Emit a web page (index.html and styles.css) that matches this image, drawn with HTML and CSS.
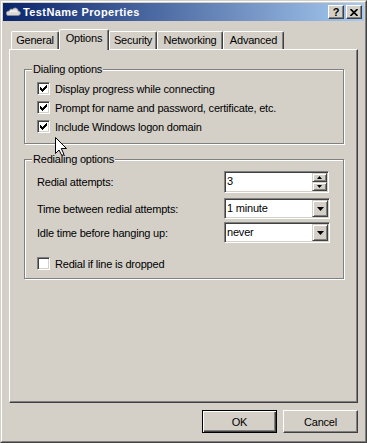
FILE: index.html
```html
<!DOCTYPE html>
<html lang="en">
<head>
    <meta charset="UTF-8">
    <title>TestName Properties</title>
    <link rel="stylesheet" href="styles.css">
</head>
<body>
    <div class="window">
        <div class="frame">
            <div class="titlebar">
                <svg class="title-icon" viewBox="0 0 16 16">
                    <path d="M2.5 11.5 H13 a2.3 2.3 0 0 0 0.3-4.6 a3.2 3.2 0 0 0-5.8-1.6 a2.4 2.4 0 0 0-3.4 1.8 a2.2 2.2 0 0 0-1.1 4.4z" fill="#d8d8d8" stroke="#8c8c8c" stroke-width="0.8"/>
                    <path d="M5 8 q2-2 4-0.5 q2-1 3 0.5" fill="none" stroke="#fff" stroke-width="1"/>
                </svg>
                <span class="title-text">TestName Properties</span>
                <div class="caption-buttons">
                    <div class="caption-btn">?</div>
                    <div class="caption-btn">
                        <svg width="8" height="7" viewBox="0 0 8 7">
                            <path d="M0.5 0 L7.5 7 M7.5 0 L0.5 7" stroke="#000" stroke-width="1.6"/>
                        </svg>
                    </div>
                </div>
            </div>

            <div class="client">
                <div class="tabs">
                    <div class="tab tab-general">General</div>
                    <div class="tab tab-options active">Options</div>
                    <div class="tab tab-security">Security</div>
                    <div class="tab tab-networking">Networking</div>
                    <div class="tab tab-advanced">Advanced</div>
                </div>

                <div class="panel">
                    <div class="group group-dialing">
                        <div class="group-label">Dialing options</div>
                        <div class="check-row">
                            <span class="checkbox checked"><svg viewBox="0 0 11 11"><rect x="2" y="4" width="1" height="3"/><rect x="3" y="5" width="1" height="3"/><rect x="4" y="6" width="1" height="3"/><rect x="5" y="5" width="1" height="3"/><rect x="6" y="4" width="1" height="3"/><rect x="7" y="3" width="1" height="3"/><rect x="8" y="2" width="1" height="3"/></svg></span>
                            Display progress while connecting
                        </div>
                        <div class="check-row">
                            <span class="checkbox checked"><svg viewBox="0 0 11 11"><rect x="2" y="4" width="1" height="3"/><rect x="3" y="5" width="1" height="3"/><rect x="4" y="6" width="1" height="3"/><rect x="5" y="5" width="1" height="3"/><rect x="6" y="4" width="1" height="3"/><rect x="7" y="3" width="1" height="3"/><rect x="8" y="2" width="1" height="3"/></svg></span>
                            Prompt for name and password, certificate, etc.
                        </div>
                        <div class="check-row">
                            <span class="checkbox checked"><svg viewBox="0 0 11 11"><rect x="2" y="4" width="1" height="3"/><rect x="3" y="5" width="1" height="3"/><rect x="4" y="6" width="1" height="3"/><rect x="5" y="5" width="1" height="3"/><rect x="6" y="4" width="1" height="3"/><rect x="7" y="3" width="1" height="3"/><rect x="8" y="2" width="1" height="3"/></svg></span>
                            Include Windows logon domain
                        </div>
                    </div>

                    <div class="group group-redial">
                        <div class="group-label">Redialing options</div>
                        <div class="field">
                            <span class="field-label">Redial attempts:</span>
                            <div class="spinner">
                                <span class="spinner-value">3</span>
                                <div class="spin">
                                    <div class="spin-btn"><svg width="5" height="3" viewBox="0 0 5 3"><path d="M2.5 0 L5 3 H0z"/></svg></div>
                                    <div class="spin-btn"><svg width="5" height="3" viewBox="0 0 5 3"><path d="M0 0 H5 L2.5 3z"/></svg></div>
                                </div>
                            </div>
                        </div>
                        <div class="field field-time">
                            <span class="field-label">Time between redial attempts:</span>
                            <div class="combo">
                                <span class="combo-value">1 minute</span>
                                <div class="drop-btn"><svg width="7" height="4" viewBox="0 0 7 4"><path d="M0 0 H7 L3.5 4z"/></svg></div>
                            </div>
                        </div>
                        <div class="field field-idle">
                            <span class="field-label">Idle time before hanging up:</span>
                            <div class="combo">
                                <span class="combo-value">never</span>
                                <div class="drop-btn"><svg width="7" height="4" viewBox="0 0 7 4"><path d="M0 0 H7 L3.5 4z"/></svg></div>
                            </div>
                        </div>
                        <div class="check-row check-redial">
                            <span class="checkbox"></span>
                            Redial if line is dropped
                        </div>
                    </div>
                </div>

                <div class="actions">
                    <button class="btn btn-default">OK</button>
                    <button class="btn">Cancel</button>
                </div>
            </div>
        </div>

        <svg class="cursor" width="12" height="19" viewBox="0 0 12 19">
            <path d="M0.5 0.5 V16.5 L4 13 L6.8 18.5 L9 17.5 L6.3 11.5 H11.5 Z" fill="#fff" stroke="#000" stroke-width="1"/>
        </svg>
    </div>
</body>
</html>
```

FILE: styles.css
```css
* {
    margin: 0;
    padding: 0;
    box-sizing: border-box;
}

body {
    font-family: 'Liberation Sans', Arial, sans-serif;
    font-size: 11px;
    letter-spacing: -0.2px;
    color: #000;
    background: #d4d0c8;
}

.window {
    position: relative;
    width: 367px;
    height: 443px;
    background: #d4d0c8;
    border: 1px solid;
    border-color: #d4d0c8 #404040 #404040 #d4d0c8;
}

.frame {
    height: 100%;
    display: flex;
    flex-direction: column;
    padding: 1px;
    border: 1px solid;
    border-color: #fff #808080 #808080 #fff;
}

/* Title bar */
.titlebar {
    height: 18px;
    display: flex;
    align-items: center;
    padding: 0 2px;
    color: #fff;
    background: linear-gradient(to right, #0a246a, #a6caf0);
}

.title-icon {
    width: 16px;
    height: 16px;
    margin-right: 2px;
}

.title-text {
    font-weight: bold;
    letter-spacing: 0.4px;
}

.caption-buttons {
    margin-left: auto;
    display: flex;
    gap: 2px;
}

.caption-btn {
    width: 16px;
    height: 14px;
    display: flex;
    align-items: center;
    justify-content: center;
    background: #d4d0c8;
    color: #000;
    font-weight: bold;
    font-size: 11px;
    border: 1px solid;
    border-color: #fff #404040 #404040 #fff;
    box-shadow: inset -1px -1px #808080;
}

/* Client area */
.client {
    flex: 1;
    display: flex;
    flex-direction: column;
    padding: 8px 6px 7px;
}

.tabs {
    height: 20px;
    display: flex;
    align-items: flex-end;
    padding-left: 2px;
}

.tab {
    height: 18px;
    line-height: 16px;
    text-align: center;
    border: 1px solid;
    border-bottom: none;
    border-color: #fff #404040 transparent #fff;
    border-radius: 2px 2px 0 0;
    box-shadow: inset -1px 0 #808080;
}

.tab.active {
    position: relative;
    z-index: 1;
    height: 21px;
    margin-bottom: -1px;
    padding-bottom: 3px;
    background: #d4d0c8;
}

.tab-general { width: 48px; }
.tab-options { width: 50px; }
.tab-security { width: 48px; }
.tab-networking { width: 66px; }
.tab-advanced { width: 61px; }

.panel {
    height: 354px;
    padding: 19px 0 0 14px;
    border: 1px solid;
    border-color: #fff #404040 #404040 #fff;
    box-shadow: inset -1px -1px #808080;
}

/* Group boxes */
.group {
    position: relative;
    width: 320px;
    padding-left: 12px;
    border: 1px solid #808080;
    box-shadow: inset 1px 1px #fff, 1px 1px #fff;
}

.group-label {
    position: absolute;
    top: -7px;
    left: 7px;
    padding: 0 1px;
    line-height: 13px;
    background: #d4d0c8;
}

.group-dialing {
    padding-top: 9px;
    padding-bottom: 7px;
}

.group-redial {
    margin-top: 15px;
    padding-top: 11px;
    padding-bottom: 5px;
}

.check-row {
    height: 19px;
    display: flex;
    align-items: center;
}

.check-redial {
    margin-top: 11px;
}

.checkbox {
    width: 13px;
    height: 13px;
    margin-right: 5px;
    background: #fff;
    border: 1px solid;
    border-color: #808080 #fff #fff #808080;
    box-shadow: inset 1px 1px #404040, inset -1px -1px #d4d0c8;
}

.checkbox svg {
    display: block;
    width: 11px;
    height: 11px;
}

/* Fields */
.field {
    display: flex;
    align-items: center;
}

.field-label {
    width: 187px;
}

.field-time {
    margin-top: 5px;
}

.field-idle {
    margin-top: 3px;
}

.spinner,
.combo {
    display: flex;
    padding: 1px;
    background: #fff;
    border: 1px solid;
    border-color: #808080 #fff #fff #808080;
    box-shadow: inset 1px 1px #404040, inset -1px -1px #d4d0c8;
}

.spinner {
    width: 105px;
    height: 22px;
}

.combo {
    width: 106px;
    height: 21px;
}

.spinner-value,
.combo-value {
    flex: 1;
    padding-left: 1px;
    line-height: 17px;
}

.spin {
    width: 15px;
    display: flex;
    flex-direction: column;
}

.spin-btn,
.drop-btn {
    display: flex;
    align-items: center;
    justify-content: center;
    background: #d4d0c8;
    border: 1px solid;
    border-color: #d4d0c8 #404040 #404040 #d4d0c8;
    box-shadow: inset 1px 1px #fff, inset -1px -1px #808080;
}

.spin-btn {
    flex: 1;
}

.drop-btn {
    width: 16px;
    height: 17px;
}

/* Buttons */
.actions {
    display: flex;
    justify-content: flex-end;
    gap: 6px;
    margin-top: 7px;
}

.btn {
    width: 75px;
    height: 23px;
    font: inherit;
    letter-spacing: inherit;
    color: #000;
    background: #d4d0c8;
    border: 1px solid;
    border-color: #fff #404040 #404040 #fff;
    box-shadow: inset -1px -1px #808080;
}

.btn-default {
    border-color: #000;
    box-shadow: inset 1px 1px #fff, inset -1px -1px #404040, inset -2px -2px #808080;
}

.cursor {
    position: absolute;
    left: 54px;
    top: 136px;
}
```
